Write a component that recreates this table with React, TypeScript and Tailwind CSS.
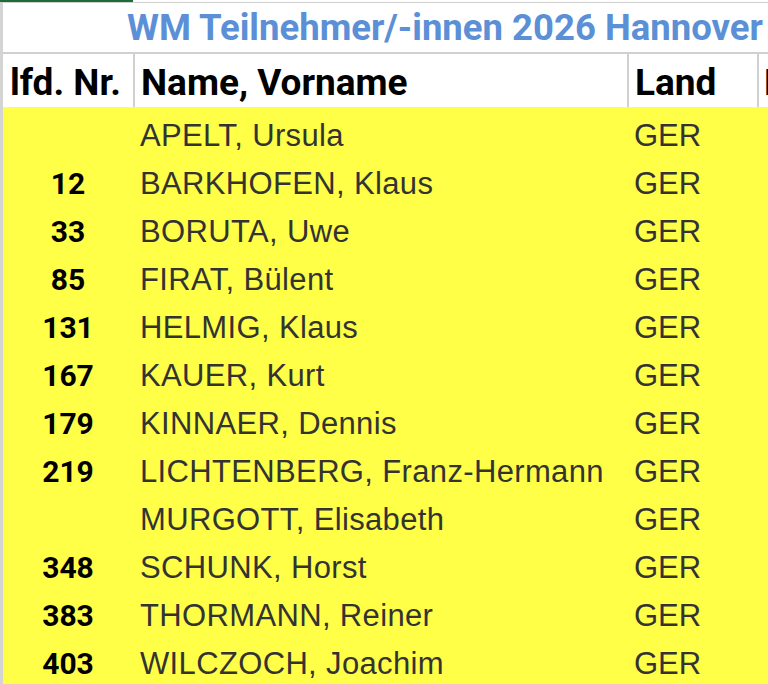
import React from 'react';

type Row = { nr: string; name: string; land: string };

const rows: Row[] = [
  { nr: '', name: 'APELT, Ursula', land: 'GER' },
  { nr: '12', name: 'BARKHOFEN, Klaus', land: 'GER' },
  { nr: '33', name: 'BORUTA, Uwe', land: 'GER' },
  { nr: '85', name: 'FIRAT, Bülent', land: 'GER' },
  { nr: '131', name: 'HELMIG, Klaus', land: 'GER' },
  { nr: '167', name: 'KAUER, Kurt', land: 'GER' },
  { nr: '179', name: 'KINNAER, Dennis', land: 'GER' },
  { nr: '219', name: 'LICHTENBERG, Franz-Hermann', land: 'GER' },
  { nr: '', name: 'MURGOTT, Elisabeth', land: 'GER' },
  { nr: '348', name: 'SCHUNK, Horst', land: 'GER' },
  { nr: '383', name: 'THORMANN, Reiner', land: 'GER' },
  { nr: '403', name: 'WILCZOCH, Joachim', land: 'GER' },
];

const head = "font-['Roboto',sans-serif] font-bold";
const body = "font-['Liberation_Sans',Arial,sans-serif]";

const App: React.FC = () => {
  return (
    <div className="w-[768px] h-[684px] overflow-hidden bg-white">
      {/* top edge */}
      <div className="flex h-[3px] border-b border-[#cfcfcf]">
        <div className="w-[133px] h-[2px] bg-[#1e6b3a]" />
      </div>

      <div className="border-l-[3px] border-[#d4d4d4]">
        {/* title row */}
        <div className="h-[51px] flex items-center border-b-2 border-[#d0d0d0]">
          <div className={`${head} pl-[124px] text-[36.5px] leading-none whitespace-nowrap text-[#5b8fd6] pt-[2px]`}>
            WM Teilnehmer/-innen 2026 Hannover
          </div>
        </div>

        {/* header row */}
        <div className={`${head} grid grid-cols-[130px_494px_130px_100px] h-[53px] text-[37px] leading-none text-black whitespace-nowrap`}>
          <div className="flex items-center pl-[7px] pt-[4px]">lfd. Nr.</div>
          <div className="flex items-center pl-[6px] pt-[4px] border-l-2 border-[#d0d0d0]">Name, Vorname</div>
          <div className="flex items-center pl-[6px] pt-[4px] border-l-2 border-[#d0d0d0]">Land</div>
          <div className="flex items-center pl-[5px] pt-[4px] border-l-2 border-[#d0d0d0]">Nation</div>
        </div>

        {/* data */}
        <div className="bg-[#ffff47] pt-[5px]">
          {rows.map((r) => (
            <div key={r.name} className="grid grid-cols-[130px_494px_130px_100px] h-[48px] leading-[48px] whitespace-nowrap">
              <div className={`${head} text-center text-[30px] text-black`}>{r.nr}</div>
              <div className={`${body} text-[31px] tracking-[0.35px] text-[#333333] pl-[7px]`}>{r.name}</div>
              <div className={`${body} text-[31px] text-[#333333] pl-[7px]`}>{r.land}</div>
              <div />
            </div>
          ))}
        </div>
      </div>
    </div>
  );
};

export default App;
